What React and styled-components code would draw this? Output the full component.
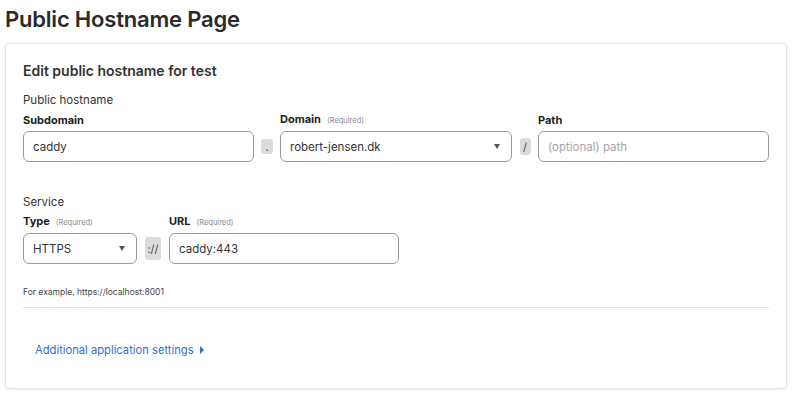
import React from "react";
import styled, { createGlobalStyle } from "styled-components";

const Global = createGlobalStyle`
  html, body { margin: 0; padding: 0; background: #ffffff; }
  body { font-family: Inter, "Noto Sans", sans-serif; color: #313131; }
  * { box-sizing: border-box; }
`;

const Page = styled.div`
  width: 800px;
  height: 405px;
  padding: 5px 13px 0 5px;
  display: flex;
  flex-direction: column;
`;

const PageTitle = styled.h1`
  margin: 0;
  height: 38px;
  font-size: 22px;
  line-height: 28px;
  font-weight: 600;
  letter-spacing: -0.2px;
  color: #2b2b2b;
`;

const Card = styled.section`
  height: 346px;
  border: 1px solid #e6e6e6;
  border-radius: 4px;
  box-shadow: 0 1px 3px rgba(0, 0, 0, 0.08);
  padding: 17px 17px 0 17px;
  display: flex;
  flex-direction: column;
`;

const CardTitle = styled.h2`
  margin: 0 0 11px;
  font-size: 14px;
  line-height: 20px;
  font-weight: 600;
  color: #333;
`;

const GroupTitle = styled.div`
  font-size: 11.5px;
  line-height: 16px;
  color: #333;
  margin-bottom: 4px;
`;

const Row = styled.div`
  display: flex;
  align-items: flex-end;
  margin-bottom: ${(p) => p.$mb || 0}px;
`;

const Field = styled.div`
  display: flex;
  flex-direction: column;
  width: ${(p) => p.$w}px;
  flex: none;
`;

const Label = styled.label`
  font-size: 11px;
  line-height: 15px;
  font-weight: 700;
  color: #222;
  margin-bottom: 3px;
  white-space: nowrap;
`;

const Req = styled.span`
  font-size: 7.5px;
  font-weight: 400;
  color: #8a8a8a;
  margin-left: 6px;
`;

const Box = styled.div`
  position: relative;
  height: 31px;
  border: 1px solid #9a9a9a;
  border-radius: 6px;
  display: flex;
  align-items: center;
  padding: 0 9px;
  font-size: 11.5px;
  color: ${(p) => (p.$placeholder ? "#a5a5a5" : "#333")};
  background: #fff;
`;

const Caret = styled.span`
  margin-left: auto;
  width: 0;
  height: 0;
  border-left: 3.5px solid transparent;
  border-right: 3.5px solid transparent;
  border-top: 5px solid #555;
  margin-right: 2px;
`;

const Sep = styled.div`
  width: ${(p) => p.$w}px;
  height: 31px;
  flex: none;
  display: flex;
  align-items: center;
  justify-content: center;
`;

const Chip = styled.span`
  width: ${(p) => p.$w}px;
  height: ${(p) => p.$h}px;
  background: #dcdcdc;
  border-radius: 3px;
  font-size: 11px;
  color: #444;
  display: flex;
  align-items: center;
  justify-content: center;
`;

const Help = styled.div`
  font-size: 8.5px;
  line-height: 12px;
  color: #444;
  margin-top: 22px;
`;

const Divider = styled.hr`
  border: 0;
  border-top: 1px solid #e3e3e3;
  margin: 9px 0 0;
`;

const LinkBtn = styled.button`
  align-self: flex-start;
  margin-top: 34px;
  background: none;
  border: 0;
  padding: 0 12px;
  font-family: inherit;
  font-size: 11.2px;
  line-height: 16px;
  color: #2e6fd0;
  display: flex;
  align-items: center;
  gap: 6px;
  cursor: pointer;
`;

const Tri = styled.span`
  width: 0;
  height: 0;
  border-top: 4px solid transparent;
  border-bottom: 4px solid transparent;
  border-left: 4px solid #2e6fd0;
`;

export default function App() {
  return (
    <>
      <Global />
      <Page>
        <PageTitle>Public Hostname Page</PageTitle>
        <Card>
          <CardTitle>Edit public hostname for test</CardTitle>
          <GroupTitle>Public hostname</GroupTitle>
          <Row $mb={32}>
            <Field $w={231}>
              <Label>Subdomain</Label>
              <Box>caddy</Box>
            </Field>
            <Sep $w={26}>
              <Chip $w={12} $h={15}>.</Chip>
            </Sep>
            <Field $w={232}>
              <Label>
                Domain<Req>(Required)</Req>
              </Label>
              <Box>
                robert-jensen.dk
                <Caret />
              </Box>
            </Field>
            <Sep $w={26}>
              <Chip $w={11} $h={17}>/</Chip>
            </Sep>
            <Field $w={231}>
              <Label>Path</Label>
              <Box $placeholder>(optional) path</Box>
            </Field>
          </Row>
          <GroupTitle>Service</GroupTitle>
          <Row>
            <Field $w={114}>
              <Label>
                Type<Req>(Required)</Req>
              </Label>
              <Box>
                HTTPS
                <Caret />
              </Box>
            </Field>
            <Sep $w={32}>
              <Chip $w={16} $h={23}>://</Chip>
            </Sep>
            <Field $w={230}>
              <Label>
                URL<Req>(Required)</Req>
              </Label>
              <Box>caddy:443</Box>
            </Field>
          </Row>
          <Help>For example, https://localhost:8001</Help>
          <Divider />
          <LinkBtn>
            Additional application settings
            <Tri />
          </LinkBtn>
        </Card>
      </Page>
    </>
  );
}
